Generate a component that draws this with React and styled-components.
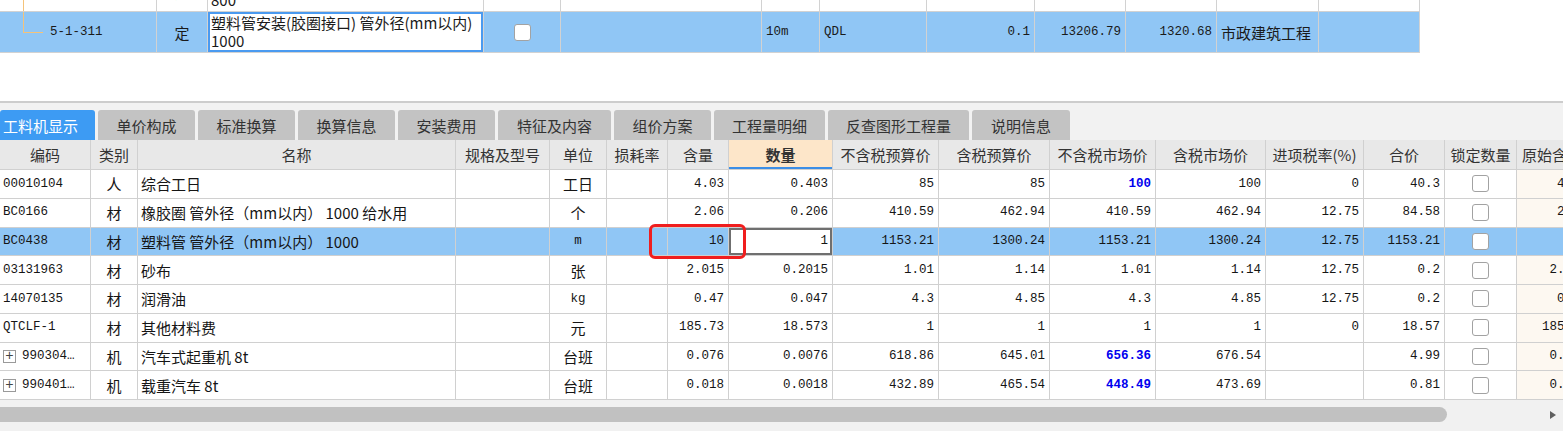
import React from "react";
import styled, { createGlobalStyle } from "styled-components";

const CJK = `"Noto Sans CJK SC", "Noto Sans", sans-serif`;
const MONO = `"Liberation Mono", "DejaVu Sans Mono", monospace`;

const hasCJK = (s) => /[\u3000-\u9fff\uff00-\uffef]/.test(String(s));

const GlobalStyle = createGlobalStyle`
  html, body {
    margin: 0;
    padding: 0;
    background: #ffffff;
    overflow: hidden;
  }
  * {
    box-sizing: border-box;
  }
`;

const Page = styled.div`
  width: 1563px;
  height: 431px;
  display: flex;
  flex-direction: column;
  overflow: hidden;
  background: #ffffff;
`;

/* ---------- upper grid (scrolled, one row partly hidden) ---------- */

const UpperPane = styled.div`
  flex-shrink: 0;
  height: 101px;
  overflow: hidden;
`;

const UpperBody = styled.div`
  margin-top: -29px;
`;

const UpperRow = styled.div`
  display: grid;
  grid-template-columns: 157px 51px 276px 77px 201px 58px 107px 108px 91px 91px 102px 101px;
  width: 1420px;
  height: 41px;
  border-bottom: 1px solid #d2d2d2;
  background: ${(p) => (p.$selected ? "#90c6f5" : "#ffffff")};
`;

const justify = (a) =>
  a === "right" ? "flex-end" : a === "center" ? "center" : "flex-start";

const UCell = styled.div`
  position: relative;
  display: flex;
  align-items: center;
  justify-content: ${(p) => justify(p.$align)};
  padding: 0 4px;
  border-right: 1px solid #d2d2d2;
  font-family: ${(p) => (p.$cjk ? CJK : MONO)};
  font-size: ${(p) => (p.$cjk ? "15px" : "12.5px")};
  line-height: 1;
  color: #1a1a1a;
  white-space: nowrap;
  overflow: hidden;
`;

const TreeCell = styled(UCell)`
  padding-left: 50px;
  &::before {
    content: "";
    position: absolute;
    left: 23px;
    top: 0;
    width: 1px;
    height: ${(p) => (p.$end ? "20px" : "100%")};
    background: #f4c37a;
  }
  &::after {
    content: "";
    display: ${(p) => (p.$end ? "block" : "none")};
    position: absolute;
    left: 23px;
    top: 20px;
    width: 20px;
    height: 1px;
    background: #f4c37a;
  }
`;

const NameCell = styled.div`
  padding: 2px 3px;
  font-family: ${CJK};
  font-size: 15px;
  line-height: 18px;
  color: #1a1a1a;
  white-space: nowrap;
  overflow: hidden;
  border-right: 1px solid #d2d2d2;
  background: ${(p) => (p.$editing ? "#ffffff" : "transparent")};
  box-shadow: ${(p) => (p.$editing ? "inset 0 0 0 2px #4a9af0" : "none")};
`;

const Checkbox = styled.span`
  display: inline-block;
  width: 17px;
  height: 17px;
  border: 1px solid #a2a2a2;
  border-radius: 3px;
  background: #ffffff;
`;

/* ---------- tabs ---------- */

const TabBar = styled.div`
  flex-shrink: 0;
  display: flex;
  gap: 3px;
  height: 39px;
  padding-top: 7px;
  border-top: 2px solid #cdcdcd;
  background: #f2f2f2;
`;

const Tab = styled.div`
  width: ${(p) => p.$w}px;
  height: 30px;
  flex-shrink: 0;
  display: flex;
  align-items: center;
  justify-content: ${(p) => (p.$active ? "flex-start" : "center")};
  padding-left: ${(p) => (p.$active ? "3px" : "0")};
  border-radius: 3px 3px 0 0;
  background: ${(p) => (p.$active ? "#3d9bf3" : "#c3c3c3")};
  color: ${(p) => (p.$active ? "#ffffff" : "#333333")};
  font-family: ${CJK};
  font-size: 15px;
  white-space: nowrap;
`;

/* ---------- lower grid ---------- */

const COLS = [91, 47, 318, 94, 57, 61, 61, 104, 106, 111, 106, 110, 98, 81, 72, 75];

const GridWrap = styled.div`
  position: relative;
  flex-shrink: 0;
`;

const GridRow = styled.div`
  display: grid;
  grid-template-columns: ${COLS.map((w) => w + "px").join(" ")};
  width: ${COLS.reduce((a, b) => a + b, 0)}px;
  height: ${(p) => (p.$head ? "30px" : "28.75px")};
  border-bottom: 1px solid #d0d0d0;
  background: ${(p) => (p.$head ? "#e8e8e8" : p.$selected ? "#90c6f5" : "#ffffff")};
`;

const HeadCell = styled.div`
  display: flex;
  align-items: center;
  justify-content: ${(p) => (p.$edge ? "flex-start" : "center")};
  padding-left: ${(p) => (p.$edge ? "5px" : "0")};
  border-right: 1px solid #d0d0d0;
  font-family: ${CJK};
  font-size: 15px;
  font-weight: ${(p) => (p.$accent ? 700 : 400)};
  color: #333333;
  white-space: nowrap;
  overflow: hidden;
  background: ${(p) => (p.$accent ? "#fde6c9" : "transparent")};
  box-shadow: ${(p) => (p.$accent ? "inset 0 -2px 0 #3c8ee6" : "none")};
`;

const Cell = styled.div`
  display: flex;
  align-items: center;
  justify-content: ${(p) => justify(p.$align)};
  gap: 6px;
  padding: ${(p) => (p.$align === "left" ? "0 2px 0 3px" : "0 4px")};
  border-right: 1px solid #d0d0d0;
  background: ${(p) => p.$bg || "transparent"};
  box-shadow: ${(p) => (p.$editing ? "inset 0 0 0 2px #6f6f6f" : "none")};
  font-family: ${(p) => (p.$cjk ? CJK : MONO)};
  font-size: ${(p) => (p.$cjk ? "15px" : "12.5px")};
  font-weight: ${(p) => (p.$strong ? 700 : 400)};
  color: ${(p) => (p.$strong ? "#0000ee" : "#151515")};
  line-height: 1;
  white-space: nowrap;
  overflow: hidden;
`;

const ExpandBox = styled.span`
  flex-shrink: 0;
  width: 13px;
  height: 13px;
  border: 1px solid #9a9a9a;
  display: flex;
  align-items: center;
  justify-content: center;
  font-family: ${MONO};
  font-size: 14px;
  line-height: 1;
  color: #444444;
  background: #ffffff;
`;

const Annotation = styled.div`
  position: absolute;
  left: 649px;
  top: 84px;
  width: 97px;
  height: 35px;
  border: 3px solid #f01e1e;
  border-radius: 6px;
  pointer-events: none;
`;

/* ---------- scrollbar ---------- */

const ScrollArea = styled.div`
  flex: 1;
  background: #f1f1f1;
  padding-top: 7px;
`;

const ScrollTrack = styled.div`
  height: 15px;
  display: flex;
  align-items: center;
`;

const ScrollThumb = styled.div`
  width: 1447px;
  height: 15px;
  background: #c1c1c1;
  border-radius: 0 8px 8px 0;
`;

const ScrollArrow = styled.div`
  margin-left: auto;
  margin-right: 7px;
  border-left: 6px solid #5f5f5f;
  border-top: 4px solid transparent;
  border-bottom: 4px solid transparent;
`;

/* ---------- data ---------- */

const TABS = [
  ["工料机显示", 95],
  ["单价构成", 97],
  ["标准换算", 97],
  ["换算信息", 97],
  ["安装费用", 97],
  ["特征及内容", 113],
  ["组价方案", 97],
  ["工程量明细", 111],
  ["反查图形工程量", 141],
  ["说明信息", 98],
];

const HEADERS = [
  "编码",
  "类别",
  "名称",
  "规格及型号",
  "单位",
  "损耗率",
  "含量",
  "数量",
  "不含税预算价",
  "含税预算价",
  "不含税市场价",
  "含税市场价",
  "进项税率(%)",
  "合价",
  "锁定数量",
  "原始含量",
];

const KEYS = [
  ["code", "left"],
  ["type", "center"],
  ["name", "left"],
  ["spec", "left"],
  ["unit", "center"],
  ["loss", "right"],
  ["content", "right"],
  ["qty", "right"],
  ["p1", "right"],
  ["p2", "right"],
  ["p3", "right"],
  ["p4", "right"],
  ["tax", "right"],
  ["total", "right"],
  ["lock", "center"],
  ["orig", "right"],
];

const ROWS = [
  { code: "00010104", type: "人", name: "综合工日", unit: "工日", content: "4.03", qty: "0.403", p1: "85", p2: "85", p3: "100", blue: true, p4: "100", tax: "0", total: "40.3", orig: "4.03" },
  { code: "BC0166", type: "材", name: "橡胶圈 管外径（mm以内） 1000 给水用", unit: "个", content: "2.06", qty: "0.206", p1: "410.59", p2: "462.94", p3: "410.59", p4: "462.94", tax: "12.75", total: "84.58", orig: "2.06" },
  { code: "BC0438", type: "材", name: "塑料管 管外径（mm以内） 1000", unit: "m", content: "10", qty: "1", p1: "1153.21", p2: "1300.24", p3: "1153.21", p4: "1300.24", tax: "12.75", total: "1153.21", orig: "10", selected: true },
  { code: "03131963", type: "材", name: "砂布", unit: "张", content: "2.015", qty: "0.2015", p1: "1.01", p2: "1.14", p3: "1.01", p4: "1.14", tax: "12.75", total: "0.2", orig: "2.015" },
  { code: "14070135", type: "材", name: "润滑油", unit: "kg", content: "0.47", qty: "0.047", p1: "4.3", p2: "4.85", p3: "4.3", p4: "4.85", tax: "12.75", total: "0.2", orig: "0.47" },
  { code: "QTCLF-1", type: "材", name: "其他材料费", unit: "元", content: "185.73", qty: "18.573", p1: "1", p2: "1", p3: "1", p4: "1", tax: "0", total: "18.57", orig: "185.73" },
  { code: "990304…", tree: true, type: "机", name: "汽车式起重机 8t", unit: "台班", content: "0.076", qty: "0.0076", p1: "618.86", p2: "645.01", p3: "656.36", blue: true, p4: "676.54", tax: "", total: "4.99", orig: "0.076" },
  { code: "990401…", tree: true, type: "机", name: "载重汽车 8t", unit: "台班", content: "0.018", qty: "0.0018", p1: "432.89", p2: "465.54", p3: "448.49", blue: true, p4: "473.69", tax: "", total: "0.81", orig: "0.018" },
];

const UpperGrid = () => (
  <UpperPane>
    <UpperBody>
      <UpperRow>
        <TreeCell />
        <UCell $cjk $align="center">定</UCell>
        <NameCell>
          塑料管安装(胶圈接口) 管外径(mm以内)
          <br />
          800
        </NameCell>
        <UCell $align="center">
          <Checkbox />
        </UCell>
        <UCell />
        <UCell />
        <UCell />
        <UCell />
        <UCell />
        <UCell />
        <UCell />
        <UCell />
      </UpperRow>
      <UpperRow $selected>
        <TreeCell $end>5-1-311</TreeCell>
        <UCell $cjk $align="center">定</UCell>
        <NameCell $editing>
          塑料管安装(胶圈接口) 管外径(mm以内)
          <br />
          1000
        </NameCell>
        <UCell $align="center">
          <Checkbox />
        </UCell>
        <UCell />
        <UCell>10m</UCell>
        <UCell>QDL</UCell>
        <UCell $align="right">0.1</UCell>
        <UCell $align="right">13206.79</UCell>
        <UCell $align="right">1320.68</UCell>
        <UCell $cjk>市政建筑工程</UCell>
        <UCell />
      </UpperRow>
    </UpperBody>
  </UpperPane>
);

const DataRow = ({ row }) => (
  <GridRow $selected={row.selected}>
    {KEYS.map(([key, align]) => {
      const value = row[key] || "";
      let bg;
      if (key === "orig" && !row.selected) bg = "#fdf8f1";
      const editing = row.selected && key === "qty";
      if (editing) bg = "#ffffff";
      if (key === "lock") {
        return (
          <Cell key={key} $align="center">
            <Checkbox />
          </Cell>
        );
      }
      if (key === "code" && row.tree) {
        return (
          <Cell key={key} $align="left">
            <ExpandBox>+</ExpandBox>
            {value}
          </Cell>
        );
      }
      return (
        <Cell
          key={key}
          $align={align}
          $bg={bg}
          $editing={editing}
          $cjk={hasCJK(value)}
          $strong={key === "p3" && row.blue}
        >
          {value}
        </Cell>
      );
    })}
  </GridRow>
);

const App = () => {
  return (
    <Page>
      <GlobalStyle />
      <UpperGrid />
      <TabBar>
        {TABS.map(([t, w], i) => (
          <Tab key={t} $w={w} $active={i === 0}>
            {t}
          </Tab>
        ))}
      </TabBar>
      <GridWrap>
        <GridRow $head>
          {HEADERS.map((h, i) => (
            <HeadCell key={h} $accent={h === "数量"} $edge={i === HEADERS.length - 1}>
              {h}
            </HeadCell>
          ))}
        </GridRow>
        {ROWS.map((r) => (
          <DataRow key={r.code} row={r} />
        ))}
        <Annotation />
      </GridWrap>
      <ScrollArea>
        <ScrollTrack>
          <ScrollThumb />
          <ScrollArrow />
        </ScrollTrack>
      </ScrollArea>
    </Page>
  );
};

export default App;
